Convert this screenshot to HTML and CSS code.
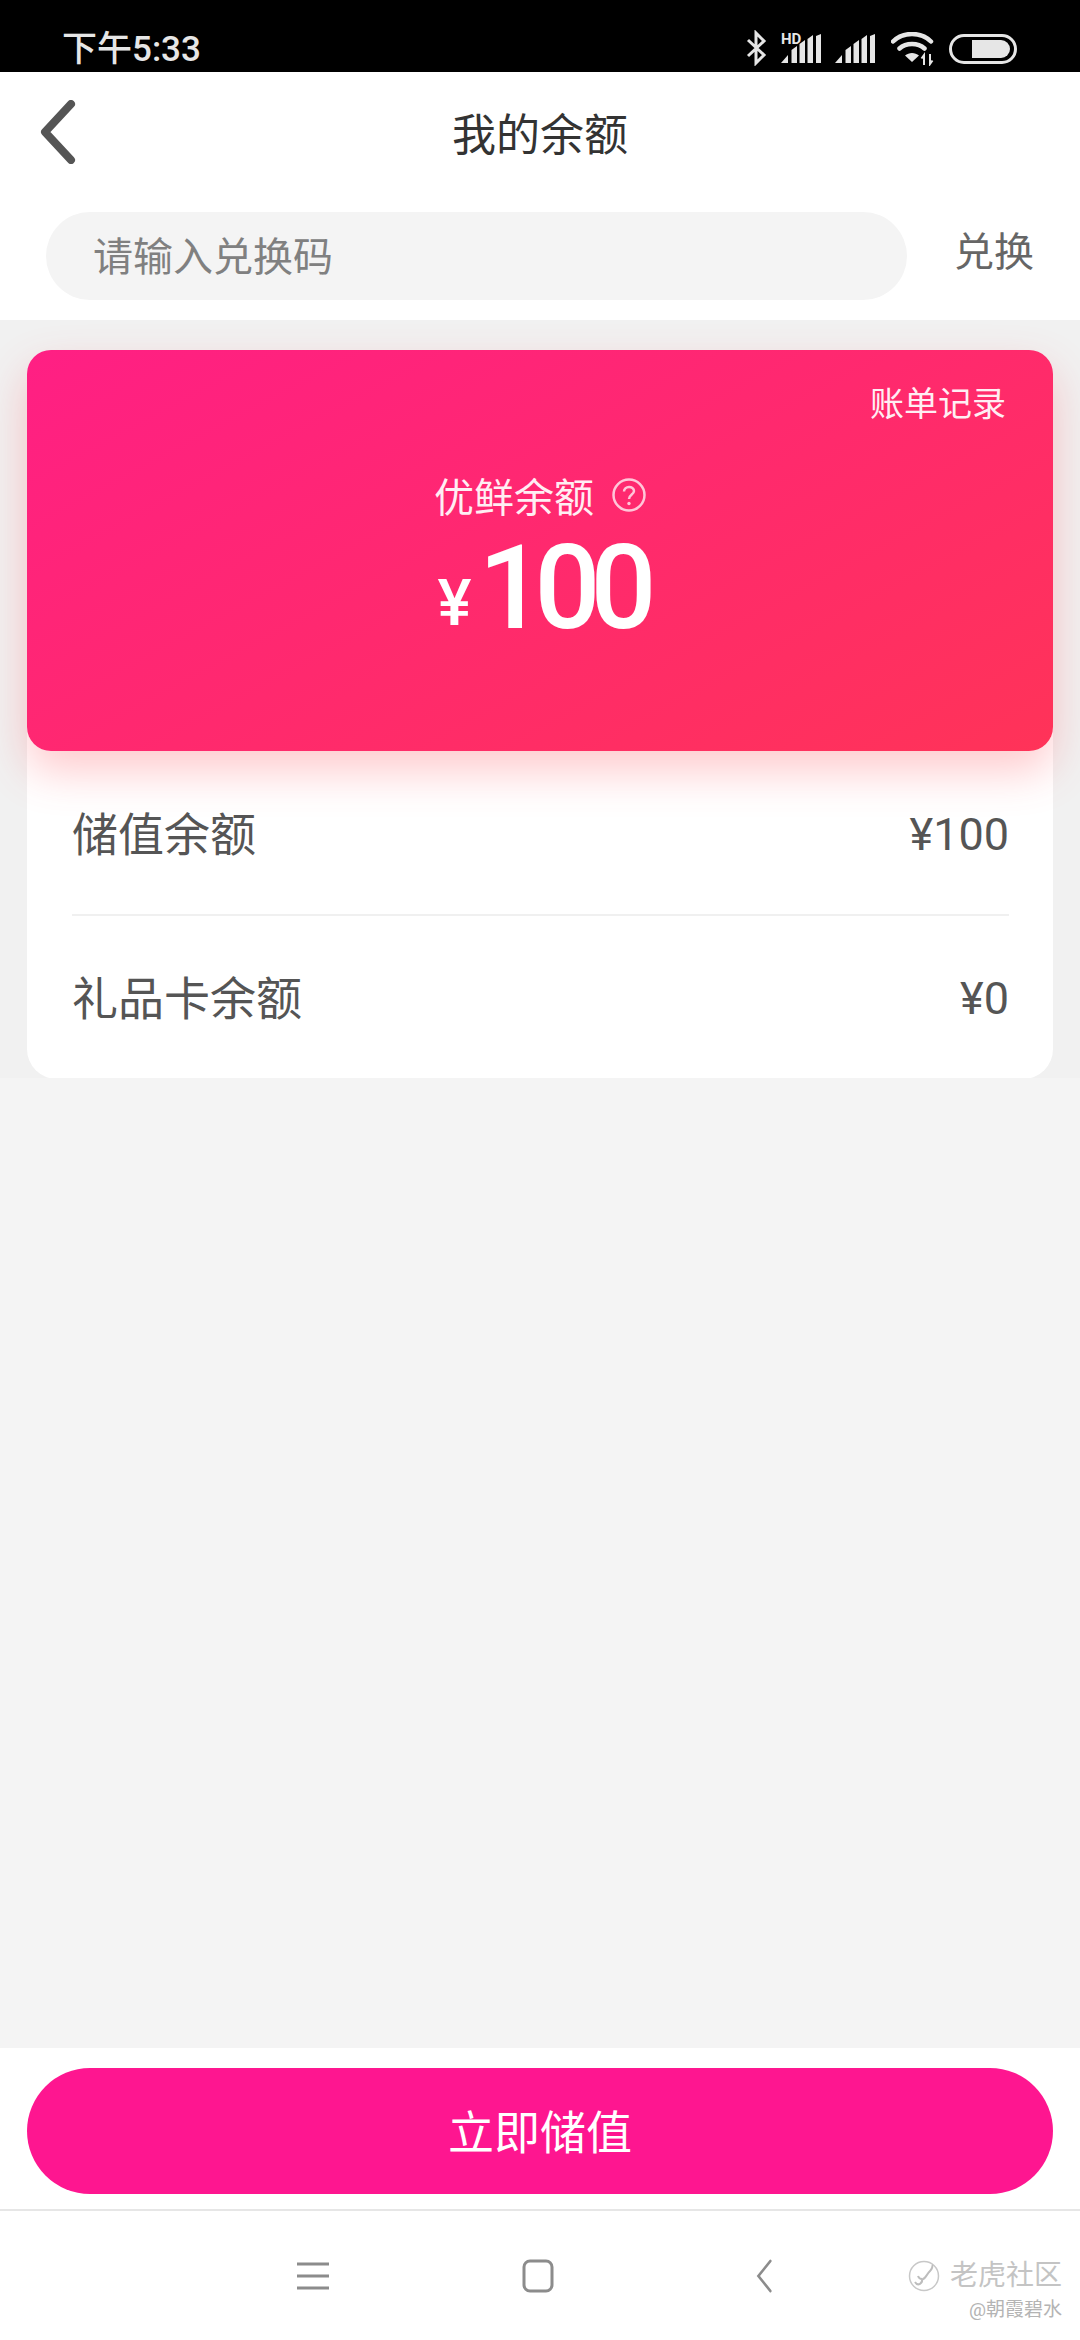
FILE: index.html
```html
<!DOCTYPE html>
<html lang="zh-CN">
<head>
    <meta charset="UTF-8">
    <meta name="viewport" content="width=device-width, initial-scale=1.0">
    <title>我的余额</title>
    <link rel="stylesheet" href="styles.css">
</head>
<body>
    <div class="status-bar">
        <span class="status-time">下午5:33</span>
        <div class="status-icons">
            <svg class="icon-bluetooth" width="21" height="36" viewBox="0 0 21 36"><path d="M2 10 18 25 10 33V3l8 8L2 26" fill="none" stroke="#e6e6e6" stroke-width="3"/></svg>
            <svg class="icon-signal" width="40" height="40" viewBox="0 0 40 40">
                <text class="signal-hd" x="0" y="21">HD</text>
                <path d="M0 40 7 32V40ZM10.500 27 16 23V40H10.500ZM18.500 21 24 17V40H18.500ZM26.500 16 32 12V40H26.500ZM35 13 40 11V40H35Z" fill="#e6e6e6"/>
            </svg>
            <svg class="icon-signal" width="40" height="29" viewBox="0 0 40 29">
                <path d="M0 29 7 21V29ZM10.500 16 16 12V29H10.500ZM18.500 10 24 6V29H18.500ZM26.500 5 32 1V29H26.500ZM35 2 40 0V29H35Z" fill="#e6e6e6"/>
            </svg>
            <svg class="icon-wifi" width="44" height="34" viewBox="0 0 44 34">
                <path d="M2 9.500C12-.500 30-.500 40 9.500M8.500 16.500C15 10.500 27 10.500 33.500 16.500" fill="none" stroke="#e6e6e6" stroke-width="4.500" stroke-linecap="round"/>
                <path d="M14 23.500C18 20 24 20 28 23.500L21 30Z" fill="#e6e6e6"/>
                <path d="M33 33V23L30.500 26.500M39 22V32L41.500 28.500" fill="none" stroke="#e6e6e6" stroke-width="2"/>
            </svg>
            <svg class="icon-battery" width="68" height="30" viewBox="0 0 68 30">
                <rect x="1.500" y="1.500" width="65" height="27" rx="13.500" fill="none" stroke="#e6e6e6" stroke-width="3"/>
                <path d="M23 6H52A9 9 0 0 1 52 24H23Z" fill="#e6e6e6"/>
            </svg>
        </div>
    </div>

    <header class="top-bar">
        <svg class="back-icon" width="36" height="64" viewBox="0 0 36 64"><path d="M31 4 5 32 31 60" fill="none" stroke="#555" stroke-width="8" stroke-linecap="round" stroke-linejoin="round"/></svg>
        <h1 class="page-title">我的余额</h1>
    </header>

    <form class="redeem-row">
        <input class="redeem-input" type="text" placeholder="请输入兑换码">
        <span class="redeem-button">兑换</span>
    </form>

    <section class="balance-section">
        <div class="balance-card">
            <a class="bill-link" href="#">账单记录</a>
            <div class="balance-label">
                <span>优鲜余额</span>
                <svg width="34" height="34" viewBox="0 0 34 34">
                    <circle cx="17" cy="17" r="15.500" fill="none" stroke="#fff" stroke-opacity=".8" stroke-width="2.500"/>
                    <path d="M12 13.500C12 7.500 22 7.500 22 13C22 16.500 17 16.500 17 21" fill="none" stroke="#fff" stroke-opacity=".8" stroke-width="2.500"/>
                    <circle cx="17" cy="25.500" r="1.700" fill="#fff" fill-opacity=".8"/>
                </svg>
            </div>
            <div class="balance-amount"><span class="balance-currency">¥</span><span class="balance-number">100</span></div>
        </div>
        <div class="balance-details">
            <div class="detail-row">
                <span class="detail-label">储值余额</span>
                <span class="detail-value">¥100</span>
            </div>
            <div class="detail-row">
                <span class="detail-label">礼品卡余额</span>
                <span class="detail-value">¥0</span>
            </div>
        </div>
    </section>

    <div class="spacer"></div>

    <div class="action-bar">
        <button class="charge-button" type="button">立即储值</button>
    </div>

    <nav class="nav-bar">
        <div class="nav-item">
            <svg width="32" height="30" viewBox="0 0 32 30"><path d="M0 3H32M0 15H32M0 27H32" stroke="#8c8c8c" stroke-width="3"/></svg>
        </div>
        <div class="nav-item">
            <svg width="32" height="34" viewBox="0 0 32 34"><rect x="2" y="2" width="28" height="30" rx="6" fill="none" stroke="#8c8c8c" stroke-width="3"/></svg>
        </div>
        <div class="nav-item">
            <svg width="20" height="34" viewBox="0 0 20 34"><path d="M18 2 3 17 18 32" transform="matrix(.8 0 0 1 3 0)" fill="none" stroke="#8c8c8c" stroke-width="3" stroke-linecap="round"/></svg>
        </div>
        <div class="watermark">
            <div class="watermark-main">
                <svg width="32" height="32" viewBox="0 0 32 32">
                    <circle cx="16" cy="16" r="14.500" fill="none" stroke="#c8c8c8" stroke-width="1.500"/>
                    <path d="M7 22C10 27 15 23 14 19M14 19C17 20 18 15 22 11C24 9 25 6 24 5M10 16C11 19 14 19 14 19" fill="none" stroke="#bdbdbd" stroke-width="2"/>
                </svg>
                <span>老虎社区</span>
            </div>
            <div class="watermark-sub">@朝霞碧水</div>
        </div>
    </nav>
</body>
</html>
```

FILE: styles.css
```css
* {
    box-sizing: border-box;
}

body {
    font-family: Roboto, "Noto Sans CJK SC", sans-serif;
    margin: 0;
    width: 1080px;
    height: 2340px;
    display: flex;
    flex-direction: column;
    background-color: #fff;
    overflow: hidden;
}

.status-bar {
    height: 72px;
    flex-shrink: 0;
    background-color: #000;
    color: #e6e6e6;
    display: flex;
    justify-content: space-between;
    align-items: flex-end;
    padding: 0 63px 1px 62px;
}

.status-time {
    font-size: 35px;
    font-weight: 500;
    line-height: 42px;
}

.status-icons {
    display: flex;
    align-items: flex-end;
    gap: 14px;
    padding-bottom: 6px;
}

.icon-bluetooth {
    margin-bottom: -1px;
}

.icon-signal {
    margin-bottom: 2px;
}

.icon-wifi {
    margin-left: 2px;
    margin-bottom: -1px;
}

.icon-battery {
    margin-bottom: 1px;
}

.signal-hd {
    font-size: 15px;
    font-weight: 700;
    fill: #e6e6e6;
}

.top-bar {
    height: 126px;
    flex-shrink: 0;
    display: flex;
    align-items: center;
    justify-content: center;
    position: relative;
}

.back-icon {
    position: absolute;
    left: 40px;
    top: 28px;
}

.page-title {
    margin: 0 0 6px;
    font-size: 44px;
    font-weight: 400;
    color: #333;
}

.redeem-row {
    height: 122px;
    flex-shrink: 0;
    margin: 0;
    padding: 14px 46px 20px;
    display: flex;
    align-items: center;
}

.redeem-input {
    width: 861px;
    height: 88px;
    border: none;
    border-radius: 44px;
    background-color: #f4f4f4;
    padding: 2px 47px 0;
    font-family: inherit;
    font-size: 40px;
    outline: none;
}

.redeem-input::placeholder {
    color: #808080;
    opacity: 1;
}

.redeem-button {
    margin-left: 47px;
    margin-bottom: 14px;
    font-size: 40px;
    color: #666;
}

.balance-section {
    height: 758px;
    flex-shrink: 0;
    padding: 30px 27px 0;
    background-color: #f1f1f1;
    overflow: hidden;
}

.balance-card {
    position: relative;
    z-index: 1;
    height: 401px;
    border-radius: 24px;
    background: linear-gradient(152deg, #ff1f84 0%, #ff3358 100%);
    box-shadow: 0 20px 44px rgba(255, 80, 90, 0.3);
    color: #fff;
    display: flex;
    flex-direction: column;
    align-items: center;
    padding-top: 117px;
}

.bill-link {
    position: absolute;
    top: 27px;
    right: 47px;
    font-size: 34px;
    color: #fff;
    text-decoration: none;
    opacity: 0.92;
}

.balance-label {
    display: flex;
    align-items: center;
    gap: 18px;
    height: 56px;
    font-size: 40px;
    opacity: 0.92;
}

.balance-amount {
    display: flex;
    align-items: baseline;
    line-height: 110px;
    margin-top: 10px;
    padding-left: 4px;
}

.balance-currency {
    font-size: 64px;
    font-weight: 500;
    margin-right: 7px;
    position: relative;
    top: -3px;
}

.balance-number {
    font-size: 116px;
    letter-spacing: -10px;
    font-weight: 500;
}

.balance-details {
    margin-top: -30px;
    padding: 30px 44px 0 45px;
    height: 358px;
    background-color: #fff;
    border-radius: 0 0 30px 30px;
}

.detail-row {
    height: 163px;
    display: flex;
    justify-content: space-between;
    align-items: center;
    font-size: 46px;
    color: #555;
}

.detail-row + .detail-row {
    border-top: 2px solid #f0f0f0;
}

.detail-label {
    margin-bottom: 4px;
}

.detail-value {
    font-size: 45px;
    margin-top: 3px;
}

.spacer {
    flex: 1;
    background-color: #f4f4f4;
}

.action-bar {
    height: 161px;
    flex-shrink: 0;
    padding: 20px 27px 0;
    background-color: #fff;
}

.charge-button {
    display: block;
    width: 100%;
    height: 126px;
    border: none;
    border-radius: 63px;
    background-color: #fe1690;
    color: #fff;
    padding: 0 0 5px;
    font-family: inherit;
    font-size: 46px;
}

.nav-bar {
    height: 131px;
    flex-shrink: 0;
    border-top: 2px solid #e6e6e6;
    padding-left: 200px;
    display: flex;
    align-items: center;
    position: relative;
}

.nav-item {
    width: 225px;
    display: flex;
    justify-content: center;
}

.watermark {
    position: absolute;
    right: 18px;
    top: 47px;
    color: #c4c4c4;
    text-align: right;
}

.watermark-main {
    display: flex;
    align-items: center;
    gap: 10px;
    font-size: 28px;
    line-height: 36px;
}

.watermark-sub {
    font-size: 19px;
    line-height: 28px;
    margin-top: 2px;
    color: #b4b4b4;
}
```
